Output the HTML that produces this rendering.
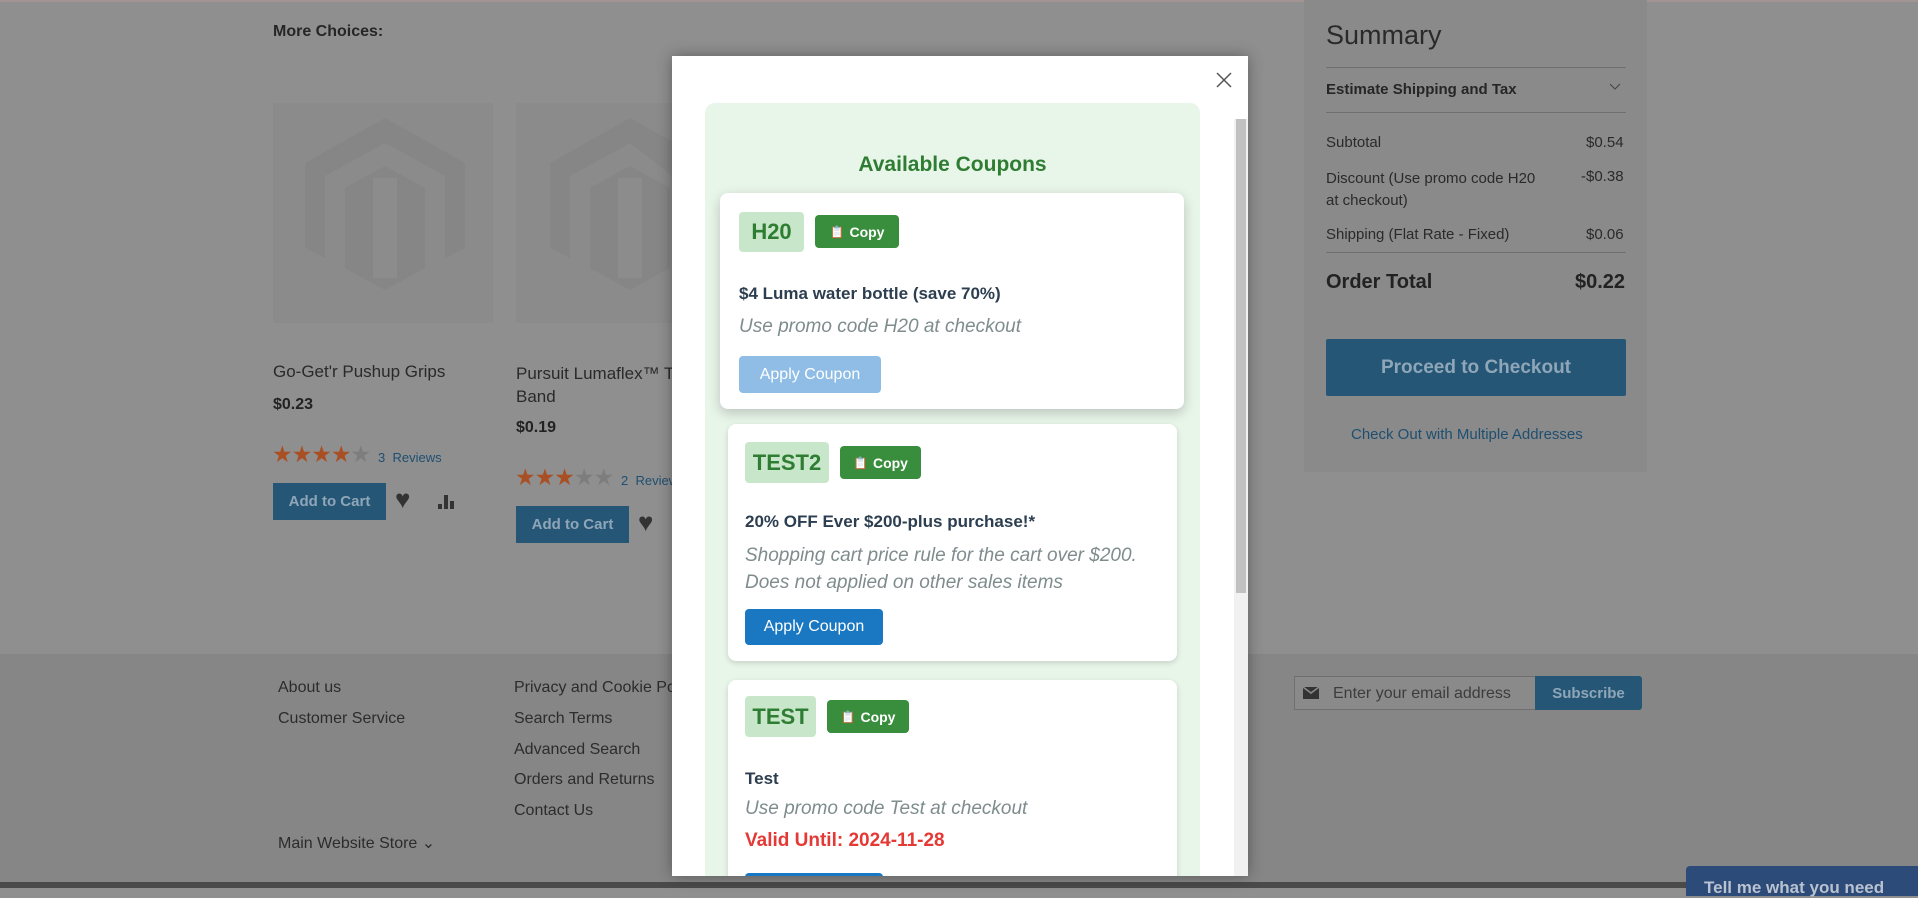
<!DOCTYPE html>
<html><head><meta charset="utf-8"><style>
*{box-sizing:border-box;margin:0;padding:0}
body{width:1918px;height:888px;overflow:hidden;background:#8f8f8f;font-family:"Liberation Sans",sans-serif;position:relative;color:#1f1f1f}
.a{position:absolute;white-space:nowrap}
.img{position:absolute;background:#8b8b8b;width:220px;height:220px}
.btn{position:absolute;background:#255676;color:#8fa6b8;font-weight:bold;font-size:15px;display:flex;align-items:center;justify-content:center}
.star{color:#a94f24;font-size:23px;letter-spacing:-1px}
.fl{font-size:16px;color:#2c2c2c}
.modal{position:absolute;left:672px;top:56px;width:576px;height:820px;background:#fff;box-shadow:0 0 14px rgba(0,0,0,.35);overflow:hidden}
.card{position:absolute;background:#fff;border-radius:8px;box-shadow:0 2px 6px rgba(0,0,0,.15)}
.badge{position:absolute;background:#c8e6c9;color:#2e7d32;font-weight:bold;font-size:22px;border-radius:4px;display:flex;align-items:center;justify-content:center}
.copy{position:absolute;background:#388e3c;color:#fff;font-weight:bold;font-size:14px;border-radius:4px;display:flex;align-items:center;justify-content:center;gap:5px}
.t{font-weight:bold;font-size:17px;color:#2c3e50}
.d{font-style:italic;font-size:19px;color:#7f8c8d}
.ap{position:absolute;color:#fff;font-size:16px;border-radius:4px;display:flex;align-items:center;justify-content:center}
</style></head><body>
<div class="a" style="left:0;top:0;width:1918px;height:2px;background:#a39494"></div>
<div class="a" style="left:273px;top:23px;font-weight:bold;font-size:16px;color:#262626">More Choices:</div>
<div class="img" style="left:273px;top:103px"></div>
<div class="img" style="left:516px;top:103px"></div>
<svg class="a" style="left:305px;top:118px" width="160" height="180" viewBox="0 0 160 180"><path d="M80 0 L160 45 L160 130 L140 140 L140 58 L80 25 L20 58 L20 140 L0 130 L0 45Z M40 70 L80 48 L120 70 L120 150 L80 172 L40 150Z" fill="#868686"/><path d="M68 60 L92 60 L92 160 L68 160Z" fill="#8c8c8c"/></svg>
<svg class="a" style="left:550px;top:118px" width="125" height="180" viewBox="0 0 125 180"><path d="M80 0 L125 25 L125 60 L80 25 L20 58 L20 140 L0 130 L0 45Z M40 70 L80 48 L120 70 L120 150 L80 172 L40 150Z" fill="#868686"/><path d="M68 60 L92 60 L92 160 L68 160Z" fill="#8c8c8c"/></svg>
<div class="a" style="left:273px;top:362px;font-size:17px;color:#2a2a2a">Go-Get'r Pushup Grips</div>
<div class="a" style="left:273px;top:396px;font-size:16px;font-weight:bold;color:#222">$0.23</div>
<div class="a star" style="left:272px;top:441px">★★★★<span style="color:#7d7d7d">★</span></div>
<div class="a" style="left:378px;top:450px;font-size:13px;color:#1f4f70">3 &nbsp;Reviews</div>
<div class="btn" style="left:273px;top:483px;width:113px;height:37px">Add to Cart</div>
<div class="a" style="left:395px;top:484px;font-size:26px;color:#333">♥</div>
<svg class="a" style="left:438px;top:492px" width="18" height="18"><rect x="0" y="12" width="4" height="5" fill="#333"/><rect x="6" y="3" width="4" height="14" fill="#333"/><rect x="12" y="9" width="4" height="8" fill="#333"/></svg>
<div class="a" style="left:516px;top:362px;font-size:17px;color:#2a2a2a;line-height:23px">Pursuit Lumaflex™ T<br>Band</div>
<div class="a" style="left:516px;top:419px;font-size:16px;font-weight:bold;color:#222">$0.19</div>
<div class="a star" style="left:515px;top:464px">★★★<span style="color:#7d7d7d">★★</span></div>
<div class="a" style="left:621px;top:473px;font-size:13px;color:#1f4f70">2 &nbsp;Reviews</div>
<div class="btn" style="left:516px;top:506px;width:113px;height:37px">Add to Cart</div>
<div class="a" style="left:638px;top:507px;font-size:26px;color:#333">♥</div>

<div class="a" style="left:1304px;top:0;width:343px;height:472px;background:#8a8a8a"></div>
<div class="a" style="left:1326px;top:20px;font-size:27px;color:#2a2a2a">Summary</div>
<div class="a" style="left:1326px;top:67px;width:300px;height:1px;background:#6f6f6f"></div>
<div class="a" style="left:1326px;top:81px;font-size:15px;font-weight:bold;color:#262626">Estimate Shipping and Tax</div>
<svg class="a" style="left:1609px;top:83px" width="12" height="8"><path d="M1 1 L6 6 L11 1" stroke="#444" fill="none"/></svg>
<div class="a" style="left:1326px;top:112px;width:300px;height:1px;background:#6f6f6f"></div>
<div class="a" style="left:1326px;top:134px;font-size:15px;color:#2a2a2a">Subtotal</div><div class="a" style="left:1586px;top:134px;font-size:15px;color:#2a2a2a">$0.54</div>
<div class="a" style="left:1326px;top:168px;font-size:15px;color:#2a2a2a;line-height:22px">Discount (Use promo code H20<br>at checkout)</div><div class="a" style="left:1581px;top:168px;font-size:15px;color:#2a2a2a">-$0.38</div>
<div class="a" style="left:1326px;top:226px;font-size:15px;color:#2a2a2a">Shipping (Flat Rate - Fixed)</div><div class="a" style="left:1586px;top:226px;font-size:15px;color:#2a2a2a">$0.06</div>
<div class="a" style="left:1326px;top:252px;width:300px;height:1px;background:#6f6f6f"></div>
<div class="a" style="left:1326px;top:271px;font-size:20px;font-weight:bold;color:#222">Order Total</div><div class="a" style="left:1575px;top:271px;font-size:20px;font-weight:bold;color:#222">$0.22</div>
<div class="btn" style="left:1326px;top:339px;width:300px;height:57px;font-size:19px;border-radius:2px">Proceed to Checkout</div>
<div class="a" style="left:1351px;top:426px;font-size:15px;color:#1f4f70">Check Out with Multiple Addresses</div>

<div class="a" style="left:0;top:654px;width:1918px;height:228px;background:#868686"></div>
<div class="a fl" style="left:278px;top:679px">About us</div>
<div class="a fl" style="left:278px;top:710px">Customer Service</div>
<div class="a fl" style="left:514px;top:679px">Privacy and Cookie Po</div>
<div class="a fl" style="left:514px;top:710px">Search Terms</div>
<div class="a fl" style="left:514px;top:741px">Advanced Search</div>
<div class="a fl" style="left:514px;top:771px">Orders and Returns</div>
<div class="a fl" style="left:514px;top:802px">Contact Us</div>
<div class="a fl" style="left:278px;top:833px">Main Website Store ⌄</div>
<div class="a" style="left:1294px;top:676px;width:242px;height:34px;border:1px solid #6f6f6f;background:#8a8a8a"></div>
<svg class="a" style="left:1303px;top:687px" width="16" height="12"><rect width="16" height="12" fill="#333"/><path d="M0 0 L8 6 L16 0" stroke="#8a8a8a" stroke-width="1.5" fill="none"/></svg>
<div class="a" style="left:1333px;top:685px;font-size:16px;color:#3c3c3c">Enter your email address</div>
<div class="btn" style="left:1535px;top:676px;width:107px;height:34px;font-size:15px;border-radius:0 3px 3px 0">Subscribe</div>
<div class="a" style="left:0;top:882px;width:1918px;height:6px;background:#4a4a4a"></div>
<div class="a" style="left:1686px;top:866px;width:232px;height:30px;background:#2d4b78;border-radius:4px 0 0 0;color:#b9c2d0;font-weight:bold;font-size:17px;padding:12px 0 0 18px">Tell me what you need</div>

<div class="modal">
 <svg class="a" style="left:544px;top:16px" width="16" height="16"><path d="M1 1 L15 15 M15 1 L1 15" stroke="#555" stroke-width="1.5"/></svg>
 <div class="a" style="left:562px;top:63px;width:14px;height:757px;background:#f1f1f1"></div>
 <div class="a" style="left:564px;top:63px;width:10px;height:474px;background:#c1c1c1"></div>
 <div class="a" style="left:33px;top:47px;width:495px;height:800px;background:#e8f5e9;border-radius:10px">
  <div class="a" style="left:0;width:495px;text-align:center;top:50px;font-size:21px;font-weight:bold;color:#2e7d32">Available Coupons</div>
  <div class="card" style="left:15px;top:90px;width:464px;height:216px;box-shadow:0 4px 12px rgba(0,0,0,.2)">
   <div class="badge" style="left:19px;top:19px;width:65px;height:40px">H20</div>
   <div class="copy" style="left:95px;top:22px;width:84px;height:33px"><span style="font-size:12px">📋</span>Copy</div>
   <div class="a t" style="left:19px;top:91px">$4 Luma water bottle (save 70%)</div>
   <div class="a d" style="left:19px;top:123px">Use promo code H20 at checkout</div>
   <div class="ap" style="left:19px;top:163px;width:142px;height:37px;background:#8fbde5">Apply Coupon</div>
  </div>
  <div class="card" style="left:23px;top:321px;width:449px;height:237px">
   <div class="badge" style="left:17px;top:18px;width:84px;height:41px">TEST2</div>
   <div class="copy" style="left:112px;top:22px;width:81px;height:33px"><span style="font-size:12px">📋</span>Copy</div>
   <div class="a t" style="left:17px;top:88px">20% OFF Ever $200-plus purchase!*</div>
   <div class="a d" style="left:17px;top:118px;line-height:27px">Shopping cart price rule for the cart over $200.<br>Does not applied on other sales items</div>
   <div class="ap" style="left:17px;top:185px;width:138px;height:36px;background:#1a78c2">Apply Coupon</div>
  </div>
  <div class="card" style="left:23px;top:577px;width:449px;height:260px">
   <div class="badge" style="left:17px;top:16px;width:71px;height:41px">TEST</div>
   <div class="copy" style="left:99px;top:20px;width:82px;height:33px"><span style="font-size:12px">📋</span>Copy</div>
   <div class="a t" style="left:17px;top:89px">Test</div>
   <div class="a d" style="left:17px;top:118px">Use promo code Test at checkout</div>
   <div class="a" style="left:17px;top:150px;font-size:19px;font-weight:bold;color:#e53935">Valid Until: 2024-11-28</div>
   <div class="ap" style="left:17px;top:193px;width:138px;height:36px;background:#1a78c2">Apply Coupon</div>
  </div>
 </div>
</div>
</body></html>
